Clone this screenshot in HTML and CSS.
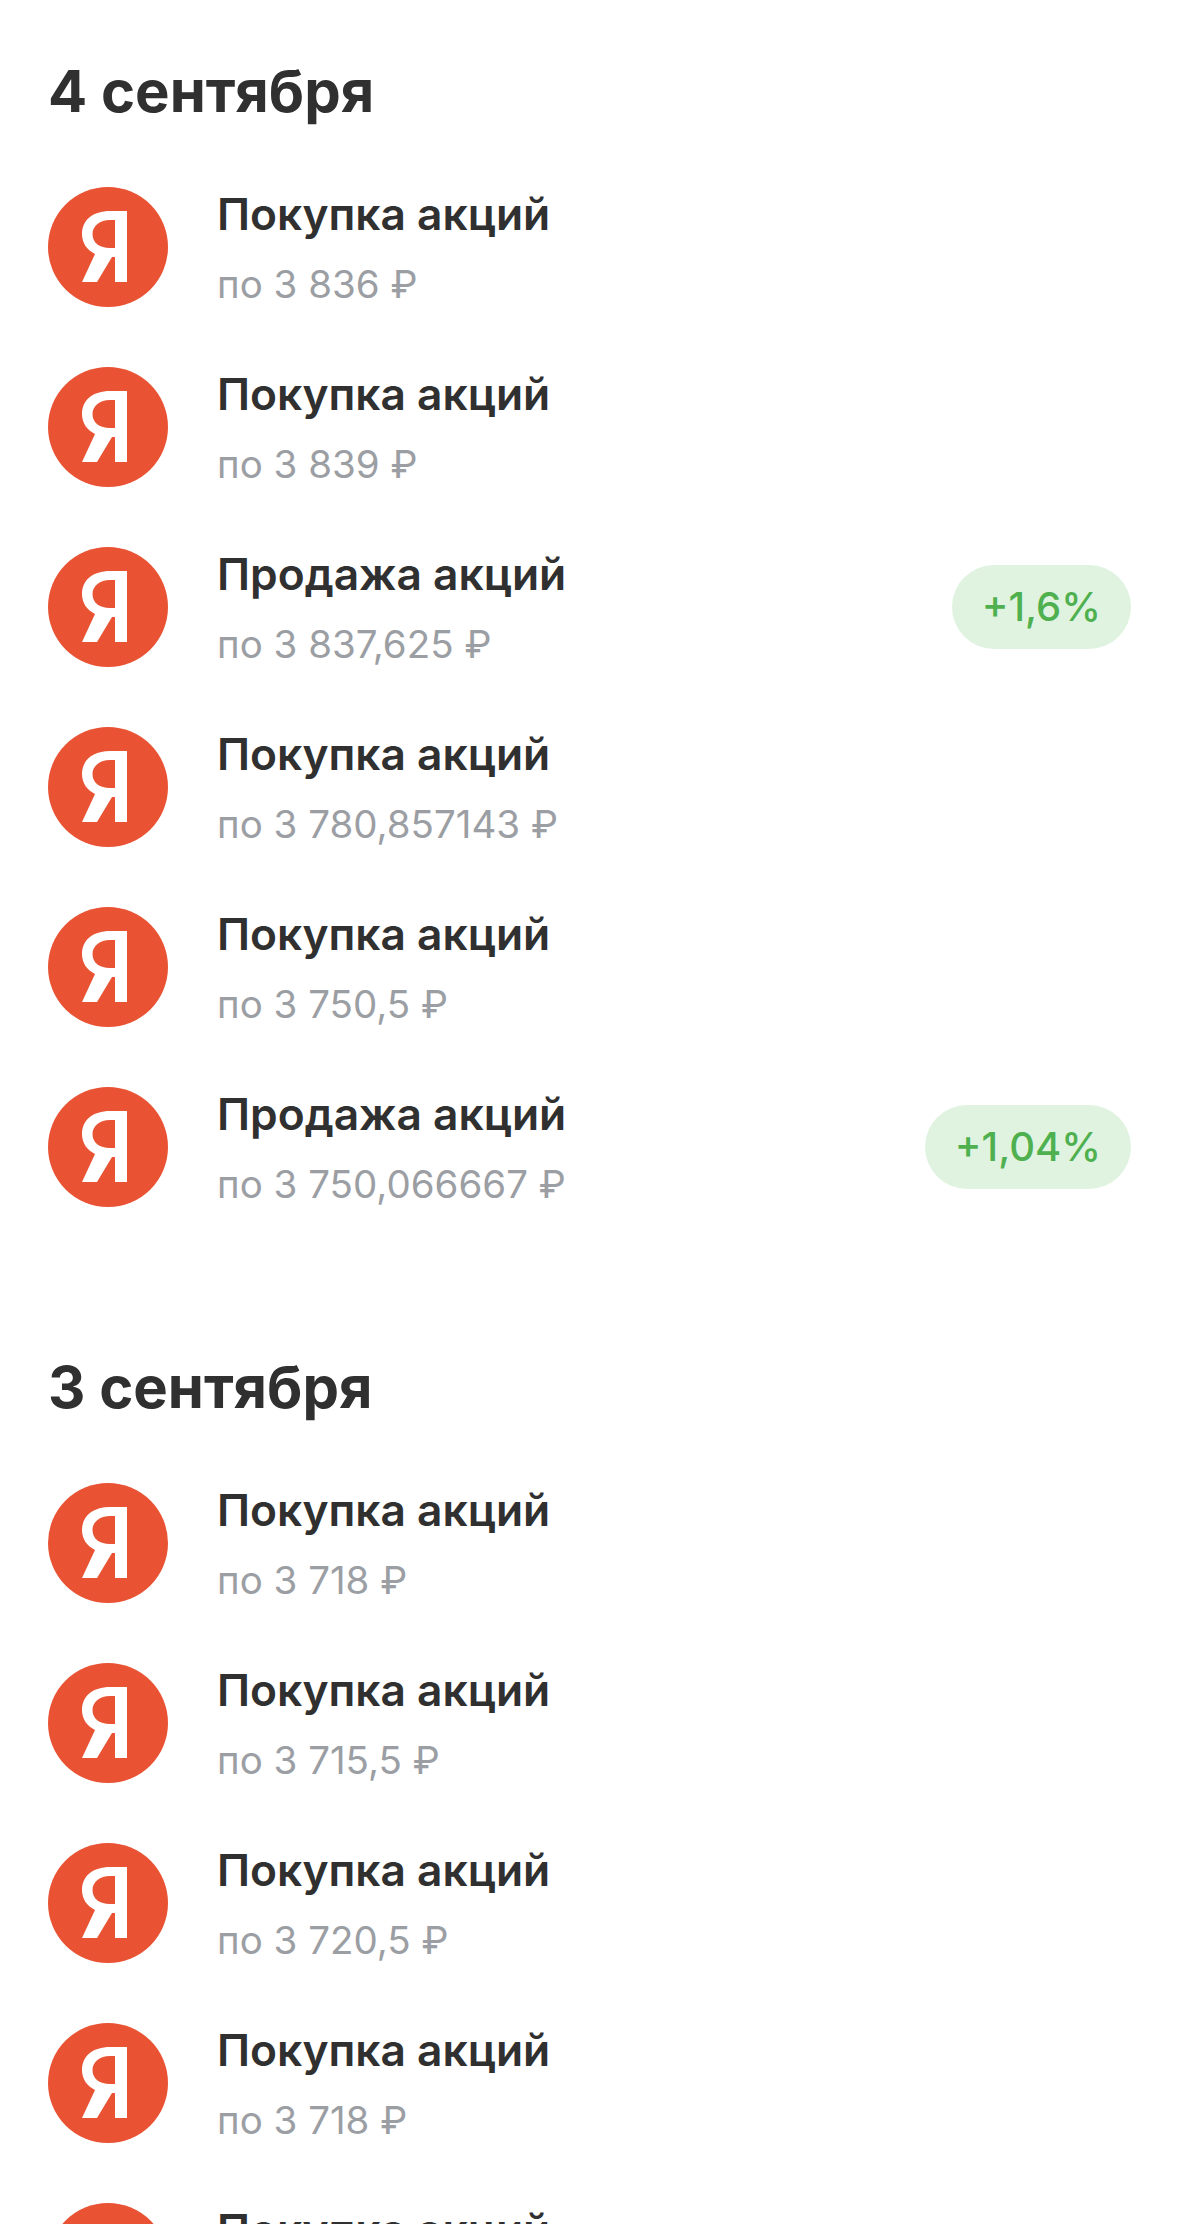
FILE: index.html
```html
<!DOCTYPE html>
<html lang="ru">
<head>
<meta charset="utf-8">
<title>Операции</title>
<link rel="stylesheet" href="styles.css">
</head>
<body>
<svg class="defs" width="0" height="0" aria-hidden="true">
  <symbol id="ya" viewBox="0 0 120 120">
    <circle cx="60" cy="60" r="60" fill="#e95233"/>
    <path fill="#fff" fill-rule="evenodd" d="M79 24H62C45 24 34 33 34 47C34 56 39 63 47 67L34 95H49L64 70H67V95H79ZM67 33V61H62C52 61 44.5 56 44.5 47C44.5 39 52 33 62 33Z"/>
  </symbol>
</svg>
<main class="feed">
  <section class="day">
    <h2 class="day-title">4 сентября</h2>
    <ul class="ops">
      <li class="op"><svg class="logo"><use href="#ya"/></svg><div class="op-text"><div class="op-name">Покупка акций</div><div class="op-price">по 3 836 ₽</div></div></li>
      <li class="op"><svg class="logo"><use href="#ya"/></svg><div class="op-text"><div class="op-name">Покупка акций</div><div class="op-price">по 3 839 ₽</div></div></li>
      <li class="op"><svg class="logo"><use href="#ya"/></svg><div class="op-text"><div class="op-name">Продажа акций</div><div class="op-price">по 3 837,625 ₽</div></div><span class="gain">+1,6%</span></li>
      <li class="op"><svg class="logo"><use href="#ya"/></svg><div class="op-text"><div class="op-name">Покупка акций</div><div class="op-price">по 3 780,857143 ₽</div></div></li>
      <li class="op"><svg class="logo"><use href="#ya"/></svg><div class="op-text"><div class="op-name">Покупка акций</div><div class="op-price">по 3 750,5 ₽</div></div></li>
      <li class="op"><svg class="logo"><use href="#ya"/></svg><div class="op-text"><div class="op-name">Продажа акций</div><div class="op-price">по 3 750,066667 ₽</div></div><span class="gain">+1,04%</span></li>
    </ul>
  </section>
  <section class="day">
    <h2 class="day-title">3 сентября</h2>
    <ul class="ops">
      <li class="op"><svg class="logo"><use href="#ya"/></svg><div class="op-text"><div class="op-name">Покупка акций</div><div class="op-price">по 3 718 ₽</div></div></li>
      <li class="op"><svg class="logo"><use href="#ya"/></svg><div class="op-text"><div class="op-name">Покупка акций</div><div class="op-price">по 3 715,5 ₽</div></div></li>
      <li class="op"><svg class="logo"><use href="#ya"/></svg><div class="op-text"><div class="op-name">Покупка акций</div><div class="op-price">по 3 720,5 ₽</div></div></li>
      <li class="op"><svg class="logo"><use href="#ya"/></svg><div class="op-text"><div class="op-name">Покупка акций</div><div class="op-price">по 3 718 ₽</div></div></li>
      <li class="op"><svg class="logo"><use href="#ya"/></svg><div class="op-text"><div class="op-name">Покупка акций</div><div class="op-price">по 3 718 ₽</div></div></li>
    </ul>
  </section>
</main>
</body>
</html>
```
FILE: styles.css
```css
* { box-sizing: border-box; }
html, body { margin: 0; padding: 0; background: #fff; height: 2224px; overflow: hidden; }
body { font-family: Inter, "Noto Sans", sans-serif; color: #303030; }
.defs { display: block; height: 0; }
.feed { padding: 0 48px; }
.day { height: 1296px; padding-top: 55px; }
.day-title { margin: 0 0 60px 0; font-size: 58px; line-height: 72px; font-weight: 700; letter-spacing: 0; height: 72px; }
.ops { list-style: none; margin: 0; padding: 0; display: flex; flex-direction: column; gap: 60px; }
.op { display: flex; align-items: center; height: 120px; }
.logo { width: 120px; height: 120px; flex: none; }
.op-text { flex: 1; margin-left: 49px; padding-top: 6px; }
.op-name { font-size: 44.3px; line-height: 50px; font-weight: 600; margin-top: -5px; }
.op-price { margin-top: 22px; font-size: 38.5px; line-height: 46px; color: #9b9ea3; }
.gain { height: 84px; padding: 0 30px; border-radius: 42px; background: #e0f3e0; color: #4fb04f; font-size: 40px; line-height: 84px; font-weight: 500; }
```
